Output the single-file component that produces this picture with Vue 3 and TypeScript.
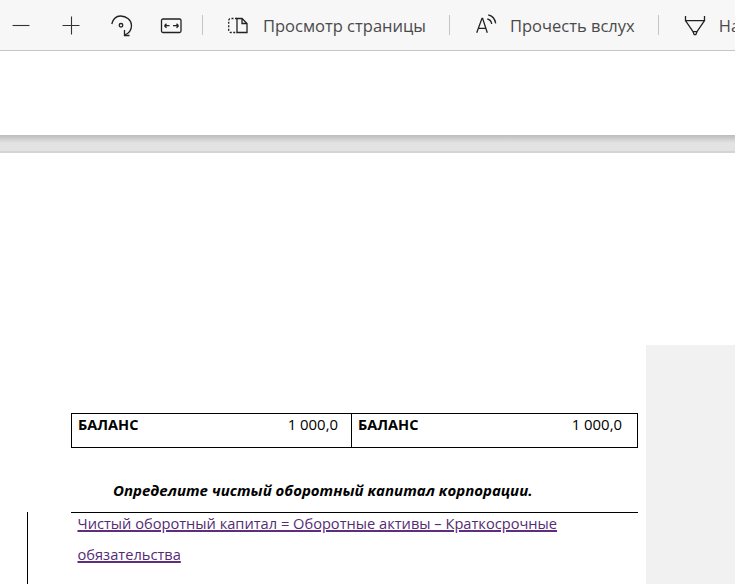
<script setup lang="ts">
// Панель просмотра PDF и кусок страницы документа
const balances = [
  { label: 'БАЛАНС', value: '1 000,0' },
  { label: 'БАЛАНС', value: '1 000,0' },
]
</script>

<template>
  <div class="viewer">
    <header class="toolbar">
      <button class="tool">
        <svg width="20" height="20" viewBox="0 0 20 20"><path d="M1.500 10.500h17" /></svg>
      </button>
      <button class="tool">
        <svg width="20" height="20" viewBox="0 0 20 20"><path d="M1.500 10.500h17M10.500 1.500v18" /></svg>
      </button>
      <button class="tool">
        <svg class="strong" width="24" height="24" viewBox="0 0 24 24">
          <path d="M2.800 11C4 6 7.500 3 11.500 3c6 0 11 4 11 9.500 0 4.500-3 8-7 9.500" />
          <circle cx="12" cy="12.300" r="1.800" />
          <path d="M15.500 17v5.500h5" />
        </svg>
      </button>
      <button class="tool">
        <svg class="strong" width="24" height="20" viewBox="0 0 24 20">
          <rect x="2.500" y="4" width="19.500" height="13.500" rx="1.500" />
          <path d="M5.500 10.700h5M5.500 10.700l2-2M5.500 10.700l2 2M14 10.700h5.500M19.500 10.700l-2-2M19.500 10.700l-2 2" />
        </svg>
      </button>
      <span class="sep first-sep"></span>
      <button class="tool text-tool page-tool">
        <svg class="strong" width="22" height="20" viewBox="0 0 22 20">
          <path class="dash" d="M10 3.500H3.700a2 2 0 0 0-2 2v10a2 2 0 0 0 2 2H10" />
          <path d="M10 3.500v14h10V8.500l-5-5zM15 3.500v5h5" />
        </svg>
        <span>Просмотр страницы</span>
      </button>
      <span class="sep"></span>
      <button class="tool text-tool read-tool">
        <svg class="strong" width="24" height="24" viewBox="0 0 24 24">
          <path d="M1.700 19.700L7 5.300h.6l4.700 14.400M3.700 15.300h7" />
          <path d="M12.300 6c2.400.5 4 2 4.400 5M13.300 2c3.600.6 6.400 3 7.400 8.300" />
        </svg>
        <span>Прочесть вслух</span>
      </button>
      <span class="sep"></span>
      <button class="tool text-tool draw-tool">
        <svg class="strong" width="22" height="24" viewBox="0 0 22 24">
          <path d="M1.500 3v4.700h19V3M1.500 7.700L9 18.700h4l7.500-11M9 18.700l1.200 3h1.600l1.200-3" />
        </svg>
        <span>Нарисовать</span>
      </button>
    </header>

    <div class="top-page"></div>
    <div class="page-gap"></div>

    <div class="page-row">
      <main class="page">
        <table class="balance">
          <colgroup>
            <col class="left-col" />
            <col />
          </colgroup>
          <tbody>
            <tr>
              <td v-for="(b, i) in balances" :key="i" class="cell">
                <div class="cell-row">
                  <strong>{{ b.label }}</strong>
                  <span class="amount">{{ b.value }}</span>
                </div>
              </td>
            </tr>
          </tbody>
        </table>

        <p class="question">Определите чистый оборотный капитал корпорации.</p>

        <div class="answer">
          <div class="answer-text">
            <a href="#" class="answer-link" @click.prevent>Чистый оборотный капитал = Оборотные активы – Краткосрочные обязательства</a>
          </div>
        </div>
      </main>
      <aside class="side"></aside>
    </div>
  </div>
</template>

<style scoped>
.viewer {
  width: 735px;
  height: 584px;
  overflow: hidden;
  background: #fff;
  display: flex;
  flex-direction: column;
}

/* верхняя панель */
.toolbar {
  flex: none;
  height: 50px;
  border-bottom: 1px solid #c6c6c6;
  background: #f7f7f7;
  display: flex;
  align-items: center;
  white-space: nowrap;
  overflow: hidden;
  font-family: "Open Sans", "Noto Sans", sans-serif;
  font-size: 16.500px;
  color: #4a4a4a;
}

.tool {
  flex: none;
  width: 50px;
  height: 50px;
  padding: 0;
  border: none;
  background: none;
  color: inherit;
  font: inherit;
  display: flex;
  align-items: center;
  justify-content: center;
}

.tool:first-child {
  margin-left: -4px;
}

.tool svg {
  fill: none;
  stroke: #333;
  stroke-width: 1.100;
  flex: none;
}

.tool svg.strong {
  stroke: #222;
  stroke-width: 1.300;
}

.dash {
  stroke-dasharray: 2 1.500;
}

.text-tool {
  width: auto;
  justify-content: flex-start;
}

.text-tool span {
  padding-top: 1px;
}

.page-tool {
  margin-left: 24px;
  gap: 14px;
}

.read-tool {
  margin-left: 25px;
  gap: 11px;
}

.draw-tool {
  margin-left: 25px;
  gap: 13px;
}

.sep {
  flex: none;
  width: 1px;
  height: 20px;
  background: #c4c4c4;
  margin-left: 23px;
}

.first-sep {
  margin-left: 6px;
}

/* конец предыдущей страницы и тень */
.top-page {
  flex: none;
  height: 84px;
  background: #fff;
}

.page-gap {
  flex: none;
  height: 18px;
  box-sizing: border-box;
  border-bottom: 2px solid #d4d4d4;
  background: linear-gradient(#bcbcbc, #e3e3e3 50%, #e3e3e3);
}

.page-row {
  flex: 1;
  min-height: 0;
  display: grid;
  grid-template-columns: 646px 1fr;
  grid-template-rows: 1fr;
}

.page {
  padding: 260px 8px 0 27px;
  display: flex;
  flex-direction: column;
  font-family: "Open Sans", "Noto Sans", sans-serif;
  color: #000;
  background: #fff;
}

.side {
  margin-top: 192px;
  background: #f1f1f1;
}

.balance {
  flex: none;
  width: 567px;
  margin-left: 44px;
  table-layout: fixed;
  border-collapse: collapse;
  border: 1px solid #000;
}

.left-col {
  width: 280px;
}

.cell {
  height: 33px;
  padding: 0 15px 0 6px;
  vertical-align: top;
  border-left: 1px solid #000;
}

.cell:first-child {
  padding-right: 13px;
}

.cell-row {
  display: flex;
  justify-content: space-between;
  line-height: 21px;
  font-size: 14.500px;
}

.amount {
  font-size: 14.900px;
}

.question {
  margin: 31px 0 0 86px;
  font-size: 15px;
  font-weight: 700;
  font-style: italic;
  line-height: 22px;
}

.answer {
  flex: 1;
  margin-top: 11px;
  padding-left: 49.500px;
  border-left: 1px solid #000;
  position: relative;
}

.answer::before {
  content: "";
  position: absolute;
  left: 43px;
  right: 0;
  top: 0;
  height: 1px;
  background: #000;
}

.answer-text {
  margin-top: -4px;
  font-size: 14.640px;
  line-height: 31px;
}

.answer-link {
  color: #542c74;
  text-decoration: underline;
  text-decoration-color: #5f2d7f;
  text-decoration-thickness: 1.500px;
}
</style>

<style>
html,
body {
  margin: 0;
  background: #fff;
}
</style>
